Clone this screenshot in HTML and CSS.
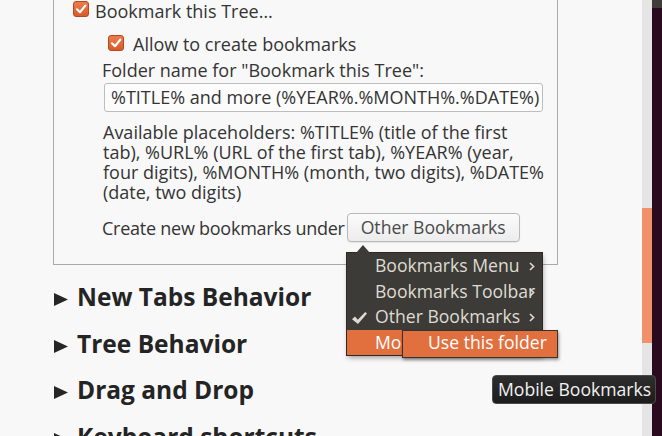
FILE: index.html
```html
<!DOCTYPE html>
<html>
<head>
<meta charset="utf-8">
<title>Tree Style Tab options</title>
<link rel="stylesheet" href="styles.css">
</head>
<body>
<div class="window">
  <main class="content">
    <div class="group">
      <div class="check-row">
        <span class="checkbox"><svg width="14" height="14" viewBox="0 0 14 14"><path d="M3 7.3 L6 10.2 L11.3 3.6" fill="none" stroke="#fff" stroke-width="2.2" stroke-linecap="round" stroke-linejoin="round"/></svg></span>
        <span class="check-label">Bookmark this Tree…</span>
      </div>
      <div class="sub">
        <div class="check-row sub-check">
          <span class="checkbox"><svg width="14" height="14" viewBox="0 0 14 14"><path d="M3 7.3 L6 10.2 L11.3 3.6" fill="none" stroke="#fff" stroke-width="2.2" stroke-linecap="round" stroke-linejoin="round"/></svg></span>
          <span class="check-label">Allow to create bookmarks</span>
        </div>
        <div class="field-label">Folder name for "Bookmark this Tree":</div>
        <div class="text-input">%TITLE% and more (%YEAR%.%MONTH%.%DATE%)</div>
        <p class="hint">Available placeholders: %TITLE% (title of the first<br>tab), %URL% (URL of the first tab), %YEAR% (year,<br>four digits), %MONTH% (month, two digits), %DATE%<br>(date, two digits)</p>
        <div class="under-row">
          <span class="under-label">Create new bookmarks under</span>
          <span class="button">Other Bookmarks</span>
        </div>
      </div>
    </div>
    <ul class="sections">
      <li class="section"><svg class="disclosure" width="14" height="13" viewBox="0 0 14 13"><path d="M0 0 L14 6.5 L0 13 Z" fill="#262626"/></svg>New Tabs Behavior</li>
      <li class="section"><svg class="disclosure" width="14" height="13" viewBox="0 0 14 13"><path d="M0 0 L14 6.5 L0 13 Z" fill="#262626"/></svg>Tree Behavior</li>
      <li class="section"><svg class="disclosure" width="14" height="13" viewBox="0 0 14 13"><path d="M0 0 L14 6.5 L0 13 Z" fill="#262626"/></svg>Drag and Drop</li>
      <li class="section"><svg class="disclosure" width="14" height="13" viewBox="0 0 14 13"><path d="M0 0 L14 6.5 L0 13 Z" fill="#262626"/></svg>Keyboard shortcuts</li>
    </ul>
  </main>
  <div class="scrollbar"><div class="scroll-thumb"></div></div>
  <div class="edge"></div>

  <div class="menu">
    <div class="menu-item">Bookmarks Menu<svg class="chevron" width="6" height="9" viewBox="0 0 6 9"><path d="M1 1 L4.6 4.5 L1 8" fill="none" stroke="#dfdbd2" stroke-width="1.6"/></svg></div>
    <div class="menu-item">Bookmarks Toolbar<svg class="chevron" width="6" height="9" viewBox="0 0 6 9"><path d="M1 1 L4.6 4.5 L1 8" fill="none" stroke="#dfdbd2" stroke-width="1.6"/></svg></div>
    <div class="menu-item"><svg class="menu-check" width="15" height="12" viewBox="0 0 15 12"><path d="M0 7.2 L3 4.6 L5.8 7.8 L13.2 0 L15 1.4 L6 12 Z" fill="#dfdbd2"/></svg>Other Bookmarks<svg class="chevron" width="6" height="9" viewBox="0 0 6 9"><path d="M1 1 L4.6 4.5 L1 8" fill="none" stroke="#dfdbd2" stroke-width="1.6"/></svg></div>
    <div class="menu-item active">Mobile Bookmarks</div>
  </div>
  <div class="submenu">Use this folder</div>
  <div class="tooltip">Mobile Bookmarks</div>
</div>
</body>
</html>
```

FILE: styles.css
```css
* { box-sizing: border-box; }

html, body {
  margin: 0;
  padding: 0;
  background: #f8f8f8;
}

body {
  font-family: "Open Sans", sans-serif;
  font-size: 18px;
  color: #343434;
}

.window {
  position: relative;
  display: flex;
  width: 662px;
  height: 436px;
  overflow: hidden;
}

.content {
  flex: 1;
  padding-left: 53px;
  overflow: hidden;
}

.group {
  width: 505px;
  border: 1px solid #a9a9a9;
  border-top: none;
  padding: 1px 0 22px 19px;
}

.check-row {
  display: flex;
  align-items: flex-start;
  gap: 6px;
  line-height: 20px;
}

.checkbox {
  width: 16px;
  height: 16px;
  flex: none;
  display: flex;
  align-items: center;
  justify-content: center;
  border-radius: 3px;
  border: 1px solid #b2491f;
  background: linear-gradient(#ec7c4c, #d95b2b);
}

.sub {
  margin-left: 29px;
}

.sub-check {
  margin-top: 13px;
  margin-left: 6px;
  gap: 9px;
}

.sub-check .checkbox {
  margin-top: 1px;
}

.field-label {
  margin-top: 6px;
  line-height: 20px;
}

.text-input {
  margin: 3px 0 0 2px;
  width: 439px;
  height: 29px;
  border: 1px solid #bdbdbd;
  border-radius: 3px;
  background: #fcfcfc;
  padding-left: 6px;
  line-height: 27px;
  white-space: nowrap;
  overflow: hidden;
}

.hint {
  margin: 10px 0 0 1px;
  line-height: 20px;
  white-space: nowrap;
}

.under-row {
  margin-top: 11px;
  display: flex;
  align-items: center;
  gap: 2px;
  height: 29px;
}

.under-label {
  letter-spacing: -0.25px;
}

.button {
  height: 29px;
  padding: 0 13px;
  border: 1px solid #b9b9b9;
  border-radius: 4px;
  background: linear-gradient(#fbfbfb, #ececec);
  color: #4a4a4a;
  font-size: 17.6px;
  line-height: 26px;
  box-shadow: 0 1px 1px rgba(0, 0, 0, 0.08);
}

.sections {
  list-style: none;
  margin: 0;
  padding: 15.3px 0 0 1px;
}

.section {
  font-size: 24.5px;
  font-weight: 700;
  line-height: 34px;
  margin-bottom: 12.5px;
  color: #242424;
  white-space: nowrap;
}

.disclosure {
  display: inline-block;
  vertical-align: baseline;
  margin-right: 9px;
}

.scrollbar {
  width: 10px;
  flex: none;
  background: #e5e5e5;
  padding-top: 208px;
}

.scroll-thumb {
  height: 135px;
  background: #f0916b;
}

.edge {
  width: 10px;
  flex: none;
  background: linear-gradient(#3e3d39 0, #3e3d39 8px, #2a0a1e 8px);
}

/* popup menu */
.menu {
  position: absolute;
  left: 347px;
  top: 253px;
  width: 195px;
  background: #3c3b37;
  box-shadow: 0 0 0 1px #2a2926, 1px 3px 5px rgba(0, 0, 0, 0.35);
  font-size: 17.6px;
  color: #dfdbd2;
}

.menu::before {
  content: "";
  position: absolute;
  left: 9px;
  top: -8px;
  border-left: 7px solid transparent;
  border-right: 7px solid transparent;
  border-bottom: 8px solid #3c3b37;
}

.menu-item {
  position: relative;
  height: 25.5px;
  line-height: 25.5px;
  padding-left: 28px;
  white-space: nowrap;
}

.menu-item.active {
  background: #e2703f;
  color: #ffffff;
}

.chevron {
  position: absolute;
  left: 182px;
  top: 9px;
}

.menu-check {
  position: absolute;
  left: 5px;
  top: 8px;
}

.submenu {
  position: absolute;
  left: 402px;
  top: 330px;
  width: 156px;
  height: 28px;
  background: #e2703f;
  border: 1px solid #34332f;
  box-shadow: 1px 2px 3px rgba(0, 0, 0, 0.4);
  color: #ffffff;
  font-size: 17.6px;
  line-height: 23px;
  padding-left: 25px;
  white-space: nowrap;
}

.tooltip {
  position: absolute;
  left: 492px;
  top: 375px;
  width: 164px;
  height: 29px;
  border: 1px solid #4a4a4a;
  border-radius: 4px;
  background: linear-gradient(#2e2e2e, #1c1c1c);
  color: #f2f2f2;
  font-size: 17.6px;
  line-height: 26px;
  padding-left: 5px;
  white-space: nowrap;
}
```
